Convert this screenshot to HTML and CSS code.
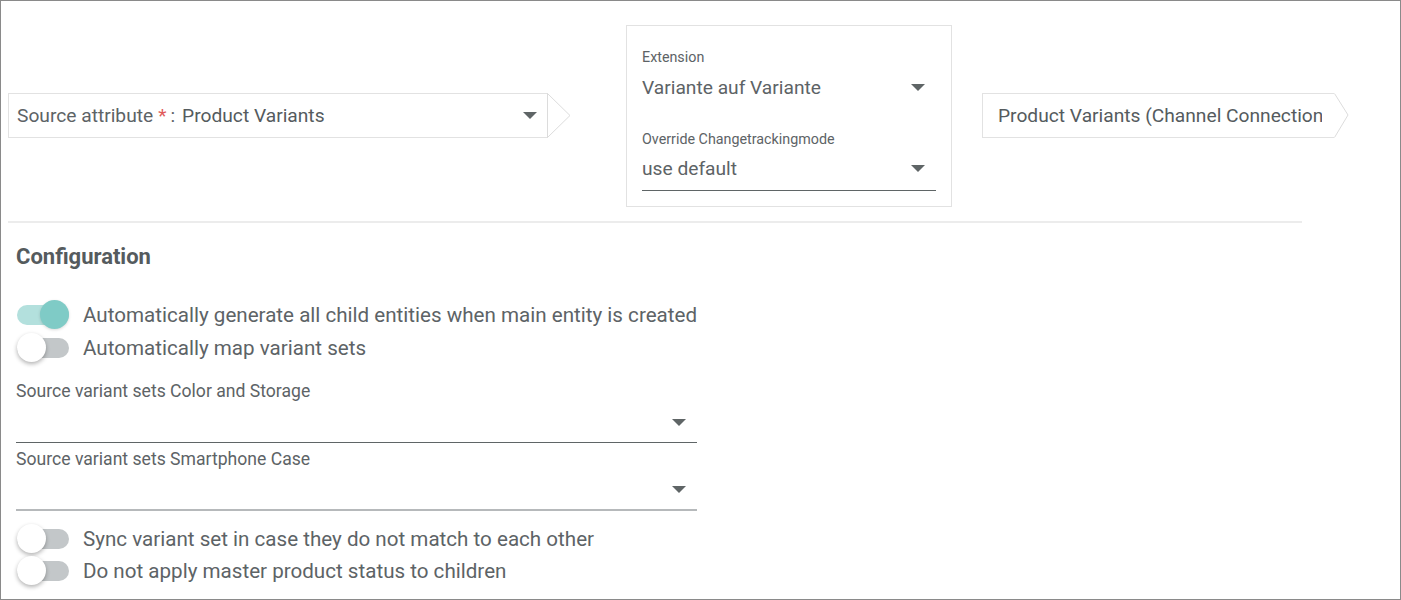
FILE: index.html
```html
<!DOCTYPE html>
<html>
<head>
<meta charset="utf-8">
<link rel="stylesheet" href="styles.css">
</head>
<body>
<div class="frame">
  <div class="top-row">
    <div class="chip source">
      <div class="chip-box">
        <span class="chip-label">Source attribute</span><span class="req">*</span><span class="colon">:</span>
        <span class="chip-value">Product Variants</span>
        <span class="caret"></span>
      </div>
      <svg class="chip-arrow" width="24" height="45" viewBox="0 0 24 45"><polyline points="0.5,0.5 23,22.5 0.5,44.5" fill="none" stroke="#dcdcdc" stroke-width="1"/></svg>
    </div>
    <div class="ext-box">
      <div class="ext-field">
        <div class="ext-label">Extension</div>
        <div class="ext-select"><span>Variante auf Variante</span><span class="caret"></span></div>
      </div>
      <div class="ext-field">
        <div class="ext-label">Override Changetrackingmode</div>
        <div class="ext-select underline"><span>use default</span><span class="caret"></span></div>
      </div>
    </div>
    <div class="chip target">
      <div class="chip-box">
        <span class="chip-value">Product Variants (Channel Connection)</span>
      </div>
      <svg class="chip-arrow" width="16" height="45" viewBox="0 0 16 45"><polyline points="0.5,0.5 14,22 0.5,44.5" fill="none" stroke="#dcdcdc" stroke-width="1"/></svg>
    </div>
  </div>
  <div class="separator"></div>
  <div class="config">
    <h2 class="config-title">Configuration</h2>
    <div class="toggles first">
      <div class="toggle-row"><span class="switch on"><span class="thumb"></span></span><span class="toggle-text">Automatically generate all child entities when main entity is created</span></div>
      <div class="toggle-row"><span class="switch"><span class="thumb"></span></span><span class="toggle-text">Automatically map variant sets</span></div>
    </div>
    <div class="field">
      <div class="field-label">Source variant sets Color and Storage</div>
      <div class="field-select"><span class="caret"></span></div>
    </div>
    <div class="field light">
      <div class="field-label">Source variant sets Smartphone Case</div>
      <div class="field-select"><span class="caret"></span></div>
    </div>
    <div class="toggles last">
      <div class="toggle-row"><span class="switch"><span class="thumb"></span></span><span class="toggle-text">Sync variant set in case they do not match to each other</span></div>
      <div class="toggle-row"><span class="switch"><span class="thumb"></span></span><span class="toggle-text">Do not apply master product status to children</span></div>
    </div>
  </div>
</div>
</body>
</html>
```

FILE: styles.css
```css
html, body {
  margin: 0;
  padding: 0;
  background: #ffffff;
}
body {
  font-family: Roboto, "Liberation Sans", Arial, sans-serif;
  color: #5d6366;
}
.frame {
  width: 1401px;
  height: 600px;
  box-sizing: border-box;
  border: 1px solid #8a8a8a;
  overflow: hidden;
}
.top-row {
  display: flex;
  align-items: center;
  padding-top: 24px;
  height: 182px;
}
.chip {
  display: flex;
  align-items: stretch;
  height: 45px;
  margin-top: -1px;
}
.chip-box {
  display: flex;
  align-items: center;
  box-sizing: border-box;
  border: 1px solid #e2e2e2;
  border-right-color: #dcdcdc;
  background: #fff;
  padding: 0 10px 0 8px;
  font-size: 19.2px;
  white-space: nowrap;
  overflow: hidden;
}
.chip-arrow {
  margin-left: -1px;
  flex: none;
}
.source {
  margin-left: 7px;
}
.source .chip-box {
  width: 540px;
}
.chip-label {
  color: #5d6366;
}
.req {
  color: #e05a5a;
  margin-left: 5px;
}
.colon {
  margin-left: 4px;
  margin-right: 7px;
}
.chip-value {
  flex: 1;
  color: #555b5e;
}
.caret {
  display: inline-block;
  width: 0;
  height: 0;
  border-left: 7px solid transparent;
  border-right: 7px solid transparent;
  border-top: 7px solid #5f6566;
  flex: none;
}
.ext-box {
  margin-left: 55px;
  width: 326px;
  height: 182px;
  box-sizing: border-box;
  border: 1px solid #e2e2e2;
  padding: 22px 15px 0 15px;
}
.ext-field + .ext-field {
  margin-top: 22px;
}
.ext-label {
  font-size: 14.3px;
  line-height: 18px;
  color: #5d6366;
}
.ext-select {
  display: flex;
  align-items: center;
  justify-content: space-between;
  font-size: 19.2px;
  height: 42px;
  box-sizing: border-box;
  padding-right: 11px;
}
.ext-select.underline {
  border-bottom: 1px solid #5f6566;
  height: 43px;
  padding-bottom: 1px;
}
.target {
  margin-left: 30px;
}
.target .chip-box {
  width: 352px;
  padding-left: 15px;
  padding-right: 12px;
  border-right: none;
}
.target .chip-value {
  overflow: hidden;
}
.target .chip-arrow {
  margin-left: 0;
}
.separator {
  margin: 14px 0 0 7px;
  width: 1294px;
  height: 2px;
  background: #ececec;
}
.config {
  padding-left: 15px;
}
.config-title {
  margin: 20px 0 0 0;
  font-size: 22px;
  font-weight: 700;
  line-height: 28px;
  color: #555b5e;
}
.toggles {
  display: flex;
  flex-direction: column;
}
.toggles.first {
  margin-top: 27px;
}
.toggles.last {
  margin-top: 12px;
}
.toggle-row {
  display: flex;
  align-items: center;
  height: 33px;
}
.toggles.last .toggle-row {
  height: 32px;
}
.switch {
  position: relative;
  width: 52px;
  height: 20px;
  border-radius: 10px;
  background: #c3c7c9;
  margin-left: 1px;
  flex: none;
}
.switch.on {
  background: #b3e0dd;
}
.thumb {
  position: absolute;
  top: -5px;
  left: 0;
  width: 29px;
  height: 29px;
  border-radius: 50%;
  background: #ffffff;
  box-shadow: 0 2px 4px rgba(0,0,0,0.3);
}
.switch.on .thumb {
  left: auto;
  right: 0;
  background: #7fcbc6;
  box-shadow: 0 1px 3px rgba(0,0,0,0.15);
}
.toggle-text {
  margin-left: 14px;
  font-size: 20.6px;
  color: #5d6366;
}
.field {
  width: 681px;
  margin-top: 16px;
}
.field-label {
  font-size: 17.6px;
  line-height: 22px;
}
.field-select {
  display: flex;
  justify-content: flex-end;
  align-items: center;
  height: 41px;
  border-bottom: 1px solid #5f6566;
  padding-right: 11px;
  box-sizing: border-box;
}
.field.light {
  margin-top: 5px;
}
.field.light .field-select {
  border-bottom: 2px solid #b6b9bb;
}
```
